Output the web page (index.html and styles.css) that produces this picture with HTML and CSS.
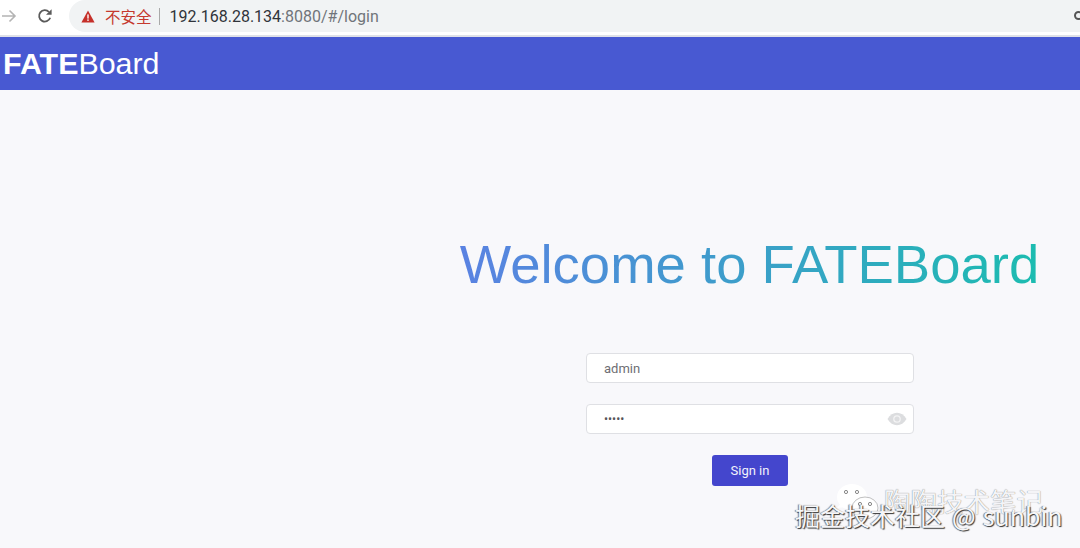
FILE: index.html
```html
<!DOCTYPE html>
<html lang="en">
<head>
    <meta charset="UTF-8">
    <title>FATEBoard</title>
    <link rel="stylesheet" href="styles.css">
</head>
<body>
    <div class="browser-bar">
        <svg class="nav-icon back-icon" viewBox="0 0 18 18" width="18" height="18">
            <path d="M2 9H15M9.5 3.5L15 9L9.5 14.5" fill="none" stroke="#b4b4b4" stroke-width="1.6"/>
        </svg>
        <svg class="nav-icon reload-icon" viewBox="0 0 18 18" width="18" height="18">
            <path d="M14.2 10.8A5.7 5.7 0 1 1 13 5" fill="none" stroke="#5a5a5a" stroke-width="1.8"/>
            <path d="M15.6 2.2V7.8H10Z" fill="#5a5a5a"/>
        </svg>
        <div class="address-bar">
            <svg class="warn-icon" viewBox="0 0 14 13" width="14" height="13">
                <path d="M7 0.5L13.6 12.5H0.4Z" fill="#c5302a"/>
                <rect x="6.3" y="4.4" width="1.4" height="4.2" fill="#fff"/>
                <rect x="6.3" y="9.4" width="1.4" height="1.5" fill="#fff"/>
            </svg>
            <span class="not-secure">不安全</span>
            <span class="divider"></span>
            <span class="url"><span class="url-host">192.168.28.134</span>:8080/#/login</span>
        </div>
        <span class="edge-icon"></span>
    </div>

    <header class="top-nav">
        <span class="logo"><strong>FATE</strong>Board</span>
    </header>

    <main class="login-page">
        <h1 class="welcome">Welcome to FATEBoard</h1>
        <form class="login-form">
            <div class="field">admin</div>
            <div class="field password-field">
                <span class="dots">•••••</span>
                <svg class="eye-icon" viewBox="0 0 20 14" width="20" height="14">
                    <path d="M0.5 7C3 2.8 6.2 0.8 10 0.8S17 2.8 19.5 7C17 11.2 13.8 13.2 10 13.2S3 11.2 0.5 7Z" fill="#dcdddf"/>
                    <circle cx="10" cy="7" r="3.2" fill="none" stroke="#f3f3f4" stroke-width="1.3"/>
                </svg>
            </div>
            <button type="button" class="sign-in">Sign in</button>
        </form>
    </main>

    <div class="watermark-wechat">
        <svg class="wechat-icon" viewBox="0 0 44 38" width="44" height="38">
            <ellipse cx="16" cy="14" rx="15" ry="13" fill="#fff"/>
            <path d="M1 25L5 20L10 24Z" fill="#fff"/>
            <ellipse cx="29" cy="25" rx="13" ry="11" fill="#fff" stroke="#a5a5a5" stroke-width="0.7"/>
            <circle cx="10" cy="9" r="1.6" fill="none" stroke="#888"/>
            <circle cx="21" cy="9" r="1.6" fill="none" stroke="#888"/>
            <circle cx="24" cy="21" r="1.6" fill="none" stroke="#888"/>
            <circle cx="34" cy="21" r="1.6" fill="none" stroke="#888"/>
        </svg>
        <span>陶陶技术笔记</span>
    </div>
    <div class="watermark-site">掘金技术社区 @ sunbin</div>
</body>
</html>
```
FILE: styles.css
```css
html, body {
    margin: 0;
    padding: 0;
}

body {
    width: 1080px;
    height: 548px;
    overflow: hidden;
    background-color: #f8f8fb;
    font-family: 'Liberation Sans', Arial, sans-serif;
    position: relative;
}

/* Browser chrome */
.browser-bar {
    box-sizing: border-box;
    height: 35px;
    padding-bottom: 3px;
    background-color: #fff;
    box-shadow: 0 2px 0 #dfe1e8;
    display: flex;
    align-items: center;
    position: relative;
}

.reload-icon {
    margin-left: 18px;
}

.address-bar {
    margin-left: 15px;
    flex: 1;
    height: 32px;
    background-color: #f1f3f4;
    border-radius: 16px 0 0 16px;
    display: flex;
    align-items: center;
    padding-left: 12px;
}

.not-secure {
    margin-left: 10px;
    color: #c5392f;
    font-family: 'Noto Sans CJK SC', sans-serif;
    font-size: 15.5px;
}

.divider {
    width: 1px;
    height: 17px;
    background-color: #a9a9a9;
    margin: 0 10px 0 7px;
}

.url {
    font-family: Roboto, sans-serif;
    font-size: 16px;
    color: #70757a;
}

.url-host {
    color: #30343a;
}

.edge-icon {
    position: absolute;
    right: -3px;
    top: 11px;
    width: 5px;
    height: 5px;
    border: 2px solid #555;
    border-radius: 50%;
}

/* App header */
.top-nav {
    height: 53px;
    margin-top: 2px;
    background-color: #4859d2;
    display: flex;
    align-items: center;
    padding-left: 3px;
}

.logo {
    color: #fff;
    font-size: 30.4px;
}

/* Login */
.login-page {
    display: flex;
    flex-direction: column;
    align-items: center;
    margin-left: 419px;
}

.welcome {
    margin: 144px 0 0;
    font-size: 54.5px;
    font-weight: normal;
    line-height: 62px;
    white-space: nowrap;
    background: linear-gradient(90deg, #5a82e2, #1cbcb0);
    -webkit-background-clip: text;
    background-clip: text;
    color: transparent;
}

.login-form {
    display: flex;
    flex-direction: column;
    align-items: center;
    margin-top: 57px;
    margin-left: 1px;
}

.field {
    box-sizing: border-box;
    width: 328px;
    height: 30px;
    background-color: #fff;
    border: 1px solid #dfe0e4;
    border-radius: 4px;
    padding-left: 17px;
    display: flex;
    align-items: center;
    font-family: Roboto, sans-serif;
    font-size: 13px;
    color: #6e6e73;
    margin-bottom: 21px;
}

.password-field {
    justify-content: space-between;
    padding-right: 6px;
}

.dots {
    font-size: 12px;
    color: #55555a;
}

.sign-in {
    width: 76px;
    height: 31px;
    background-color: #4446cd;
    color: #f2f2fb;
    border: none;
    border-radius: 3px;
    font-family: Roboto, sans-serif;
    font-size: 13px;
    padding: 0;
}

/* Watermarks stamped over the screenshot */
.watermark-wechat {
    position: absolute;
    left: 836px;
    top: 483px;
    display: flex;
    align-items: flex-start;
    font-family: 'Noto Sans CJK SC', sans-serif;
    font-size: 26.5px;
    line-height: 36px;
    color: #f4f4f7;
    text-shadow: 0 0 1px #666;
}

.watermark-wechat span {
    margin-left: 4px;
}

.watermark-site {
    position: absolute;
    left: 795px;
    top: 498px;
    font-family: 'Noto Sans CJK SC', sans-serif;
    font-size: 25px;
    line-height: 34px;
    word-spacing: 1.5px;
    color: #f6f6f8;
    text-shadow: 1px 1px 1px #333, -1px 0 1px #777;
    white-space: nowrap;
}
```
